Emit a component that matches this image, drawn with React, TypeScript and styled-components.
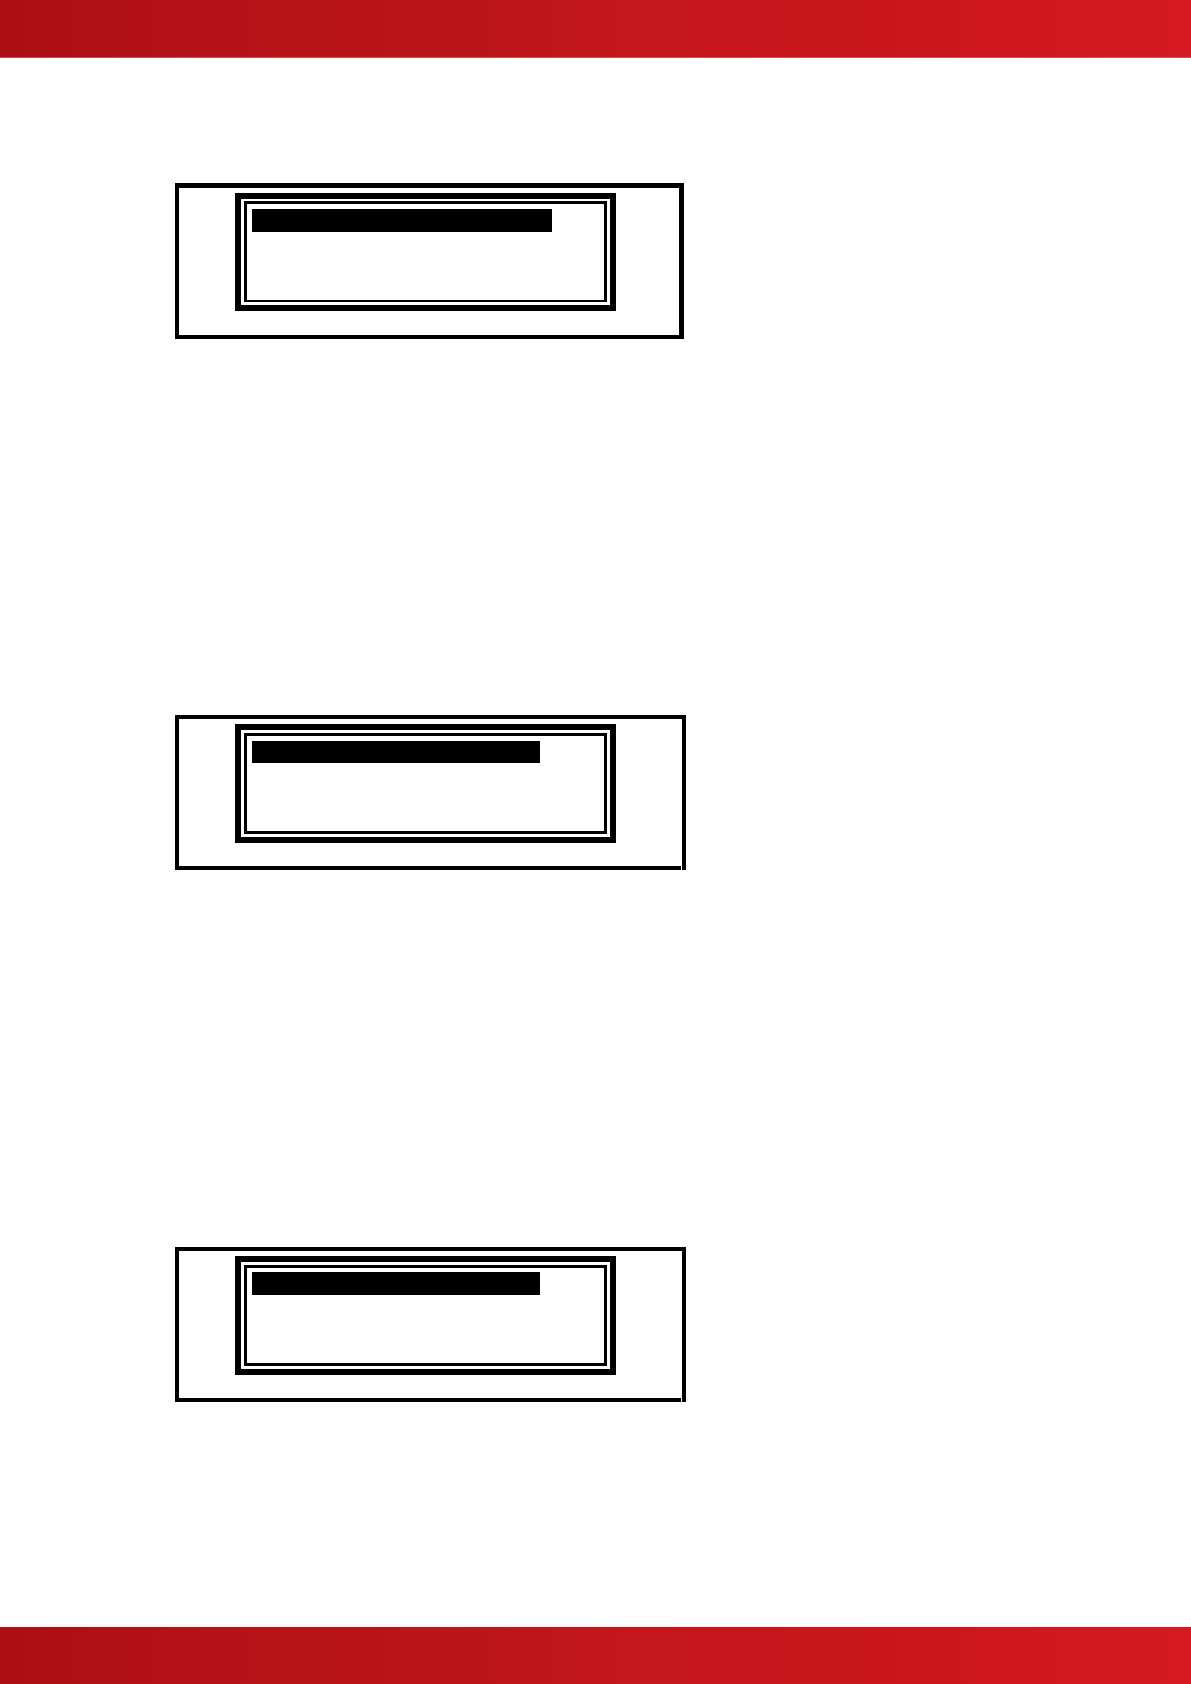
import React from "react";
import styled, { createGlobalStyle, css } from "styled-components";

const GlobalStyle = createGlobalStyle`
  *, *::before, *::after { box-sizing: border-box; }
  body {
    margin: 0;
    background: #fff;
    font-family: "Liberation Sans", Arial, sans-serif;
  }
`;

const Page = styled.div`
  display: flex;
  flex-direction: column;
  min-height: 100vh;
`;

const band = css`
  flex: none;
  background: linear-gradient(
    90deg,
    #ab0f13 0%,
    #b31216 15%,
    #bb1519 40%,
    #c4161b 52%,
    #c9161b 72%,
    #cf181d 86%,
    #d41a20 100%
  );
`;

const TopBand = styled.header`
  ${band}
  height: 58px;
  border-bottom: 1px solid #dd4b4e;
  background-clip: padding-box;
`;

const BottomBand = styled.footer`
  ${band}
  height: 57px;
`;

const Content = styled.main`
  flex: 1;
  display: grid;
  grid-auto-rows: minmax(156px, auto);
  align-content: start;
  align-items: start;
  justify-items: start;
  gap: 376px;
  padding: 125px 175px;
`;

const Panel = styled.section<{ $first?: boolean }>`
  position: relative;
  width: ${(p) => (p.$first ? 509 : 511)}px;
  max-width: 100%;
  border: 4px solid #000;
  border-top-width: ${(p) => (p.$first ? 5 : 4)}px;
  border-right-width: ${(p) => (p.$first ? 5 : 4)}px;
  padding: 5px 66px 23px 56px;

  ${(p) =>
    p.$first
      ? css`
          padding: 5px 63px 24px 56px;
        `
      : css`
          /* break between the bottom rule and the right rule */
          &::after {
            content: "";
            position: absolute;
            right: 0;
            bottom: -4px;
            width: 1px;
            height: 4px;
            background: #fff;
          }
        `}
`;

const Display = styled.div<{ $first?: boolean }>`
  border: 6px solid #000;
  padding: ${(p) => (p.$first ? "2px 3px 3px" : "3px")};
`;

const Screen = styled.div<{ $first?: boolean; $inset: number }>`
  height: 101px;
  border: 3px solid #000;
  border-bottom-width: ${(p) => (p.$first ? 2 : 3)}px;
  padding: ${(p) => p.$inset}px 5px 5px;
`;

const SelectedLine = styled.div<{ $width: number; $height: number }>`
  width: ${(p) => p.$width}px;
  max-width: 100%;
  height: ${(p) => p.$height}px;
  background: #000;
`;

const panels = [
  { first: true, inset: 5, width: 300, height: 23 },
  { first: false, inset: 5, width: 288, height: 22 },
  { first: false, inset: 4, width: 288, height: 23 },
];

export default function App() {
  return (
    <>
      <GlobalStyle />
      <Page>
        <TopBand />
        <Content>
          {panels.map((panel, index) => (
            <Panel key={index} $first={panel.first}>
              <Display $first={panel.first}>
                <Screen $first={panel.first} $inset={panel.inset}>
                  <SelectedLine $width={panel.width} $height={panel.height} />
                </Screen>
              </Display>
            </Panel>
          ))}
        </Content>
        <BottomBand />
      </Page>
    </>
  );
}
